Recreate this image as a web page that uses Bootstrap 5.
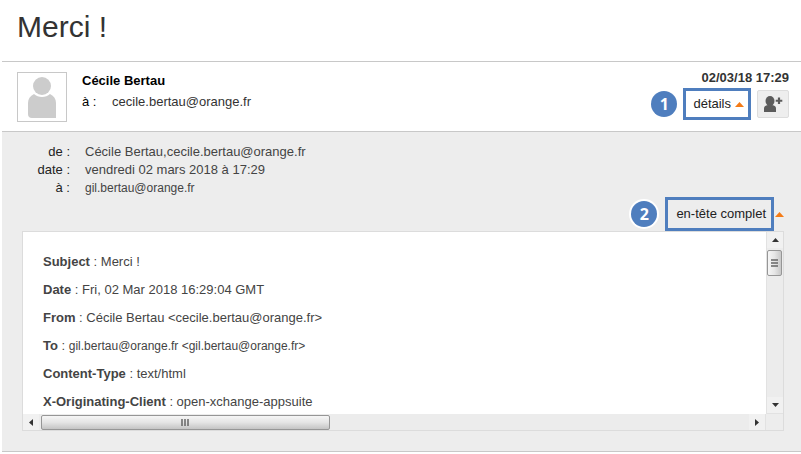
<!DOCTYPE html>
<html lang="fr">
<head>
<meta charset="utf-8">
<meta name="viewport" content="width=device-width, initial-scale=1">
<title>Merci !</title>
<link rel="stylesheet" href="https://cdn.jsdelivr.net/npm/bootstrap@5.3.0/dist/css/bootstrap.min.css">
<style>
body { font: 13px/18px "Liberation Sans", Arial, sans-serif; color: #444; background: #fff; }
.message { margin-left: 2px; }
.subject { font-size: 30px; line-height: 36px; color: #333; padding: 9px 15px 16px; }
.message-head { border-top: 1px solid #c8c8c8; border-bottom: 1px solid #c8c8c8; padding: 10px 12px 9px 15px; gap: 15px; color: #000; }
.avatar { width: 50px; height: 50px; border: 1px solid #c8c8c8; }
.sender-mail { color: #333; margin-left: 12px; }
.sender-line { line-height: 24px; }
.sent-on { color: #333; line-height: 12px; }
.head-actions { gap: 6px; margin-bottom: 2px; }
.step { width: 26px; height: 26px; border-radius: 50%; background: #4f7ebe; color: #fff; font: bold 16px/26px "Open Sans", sans-serif; text-align: center; }
.step-ring { box-shadow: 0 0 0 2px #fff; }
.toggle { border: 3px solid #4f7ebe; background: transparent; color: #222; padding: 0 4px 0 7px; }
.toggle-details { height: 32px; }
.toggle-header { height: 34px; padding: 0 5px 0 8px; margin-right: 1px; }
.caret-up { width: 9px; height: 5px; fill: #f47b16; }
.add-contact { width: 32px; height: 28px; border: 1px solid #ddd; border-radius: 2px; background: #eee; padding: 0; }
.details { background: #ededed; border-bottom: 1px solid #c8c8c8; padding: 11px 17px 20px 20px; }
.field-list { display: grid; grid-template-columns: 48px 1fr; column-gap: 15px; }
.field-list dt { font-weight: 400; text-align: right; color: #222; }
.compact { font-size: 12px; }
.raw-header { display: grid; grid-template-columns: minmax(0, 1fr) 17px; grid-template-rows: 182px 16px; border: 1px solid #dcdcdc; }
.raw-lines { background: #fff; padding: 16px 20px 0; line-height: 28px; white-space: nowrap; overflow: hidden; }
.bar { background: #ececec; }
.bar-v { border-left: 1px solid #e2e2e2; border-bottom: 1px solid #e2e2e2; }
.bar-h { border-right: 1px solid #e2e2e2; }
.bar-btn { flex: none; width: 16px; height: 16px; padding: 0; border: 0; background: #f1f1f1; }
.bar-btn svg, .grip, .avatar svg, .add-contact svg { display: block; margin: auto; }
.thumb-v, .thumb-h { border: 1px solid #969696; border-radius: 2px; display: flex; }
.thumb-v { width: 15px; height: 26px; margin-top: 2px; background: linear-gradient(90deg, #f6f6f6, #e6e6e6 50%, #c8c8c8); }
.thumb-h { width: 39%; height: 15px; margin: 0 0 0 2px; background: linear-gradient(#f6f6f6, #e4e4e4 50%, #c4c4c4); }
</style>
<script src="https://cdn.jsdelivr.net/npm/bootstrap@5.3.0/dist/js/bootstrap.bundle.min.js"></script>
</head>
<body>
<main>
  <article class="message">
    <h1 class="subject fw-normal m-0">Merci !</h1>
    <header class="message-head d-flex">
      <div class="avatar flex-shrink-0">
        <svg width="48" height="48" viewBox="0 0 48 48" fill="#ccc" role="img" aria-label="Avatar"><circle cx="24" cy="13" r="9"/><path d="M16 21c4 4 12 4 16 0 4 2 6 5 6 9v15H14q-4 0-4-4V30c0-4 2-7 6-9z"/></svg>
      </div>
      <div class="flex-grow-1">
        <div class="fw-bold">Cécile Bertau</div>
        <div class="sender-line">à : <span class="sender-mail">cecile.bertau@orange.fr</span></div>
      </div>
      <div class="d-flex flex-column align-items-end">
        <time class="sent-on fw-bold" datetime="2018-03-02T17:29">02/03/18 17:29</time>
        <div class="head-actions d-flex align-items-center mt-auto">
          <span class="step">1</span>
          <button type="button" class="toggle toggle-details d-flex align-items-center gap-1">détails <svg class="caret-up" viewBox="0 0 9 5" aria-hidden="true"><path d="M0 5 4.500 0 9 5z"/></svg></button>
          <button type="button" class="add-contact" aria-label="Ajouter aux contacts">
            <svg width="20" height="18" viewBox="0 0 20 18" fill="#5c5c5c" aria-hidden="true"><ellipse cx="7" cy="6" rx="4.500" ry="5"/><path d="M5 9h4v1c3 .500 4 1.500 4 3.500V17H1v-3.500c0-2 1-3 4-3.500zM14.900 2.500h2.200v2.200h2.200v2.100h-2.200V9h-2.200V6.800h-2.200V4.700h2.200z"/></svg>
          </button>
        </div>
      </div>
    </header>
    <section class="details">
      <dl class="field-list m-0">
        <dt>de :</dt><dd class="m-0">Cécile Bertau,cecile.bertau@orange.fr</dd>
        <dt>date :</dt><dd class="m-0">vendredi 02 mars 2018 à 17:29</dd>
        <dt>à :</dt><dd class="m-0 compact">gil.bertau@orange.fr</dd>
      </dl>
      <div class="d-flex justify-content-end align-items-center">
        <span class="step step-ring me-2">2</span>
        <button type="button" class="toggle toggle-header">en-tête complet</button>
        <svg class="caret-up" viewBox="0 0 9 5" aria-hidden="true"><path d="M0 5 4.500 0 9 5z"/></svg>
      </div>
      <div class="raw-header">
        <div class="raw-lines">
          <div><b>Subject</b> : Merci !</div>
          <div><b>Date</b> : Fri, 02 Mar 2018 16:29:04 GMT</div>
          <div><b>From</b> : Cécile Bertau &lt;cecile.bertau@orange.fr&gt;</div>
          <div><b>To</b> : <span class="compact">gil.bertau@orange.fr &lt;gil.bertau@orange.fr&gt;</span></div>
          <div><b>Content-Type</b> : text/html</div>
          <div><b>X-Originating-Client</b> : open-xchange-appsuite</div>
        </div>
        <div class="bar bar-v d-flex flex-column">
          <button type="button" class="bar-btn" aria-label="Vers le haut"><svg width="7" height="4"><path d="M0 4 3.500 0 7 4z" fill="#333"/></svg></button>
          <div class="thumb-v"><svg class="grip" width="7" height="9"><path d="M0 1h7M0 4h7M0 7h7" stroke="#666" stroke-width="1.500"/></svg></div>
          <button type="button" class="bar-btn mt-auto" aria-label="Vers le bas"><svg width="7" height="4"><path d="M0 0h7L3.500 4z" fill="#333"/></svg></button>
        </div>
        <div class="bar bar-h d-flex align-items-center">
          <button type="button" class="bar-btn" aria-label="Vers la gauche"><svg width="4" height="7"><path d="M4 0v7L0 3.500z" fill="#333"/></svg></button>
          <div class="thumb-h"><svg class="grip" width="9" height="7"><path d="M1 0v7M4 0v7M7 0v7" stroke="#666" stroke-width="1.500"/></svg></div>
          <button type="button" class="bar-btn ms-auto" aria-label="Vers la droite"><svg width="4" height="7"><path d="M0 0v7l4-3.500z" fill="#333"/></svg></button>
        </div>
      </div>
    </section>
  </article>
</main>
</body>
</html>
